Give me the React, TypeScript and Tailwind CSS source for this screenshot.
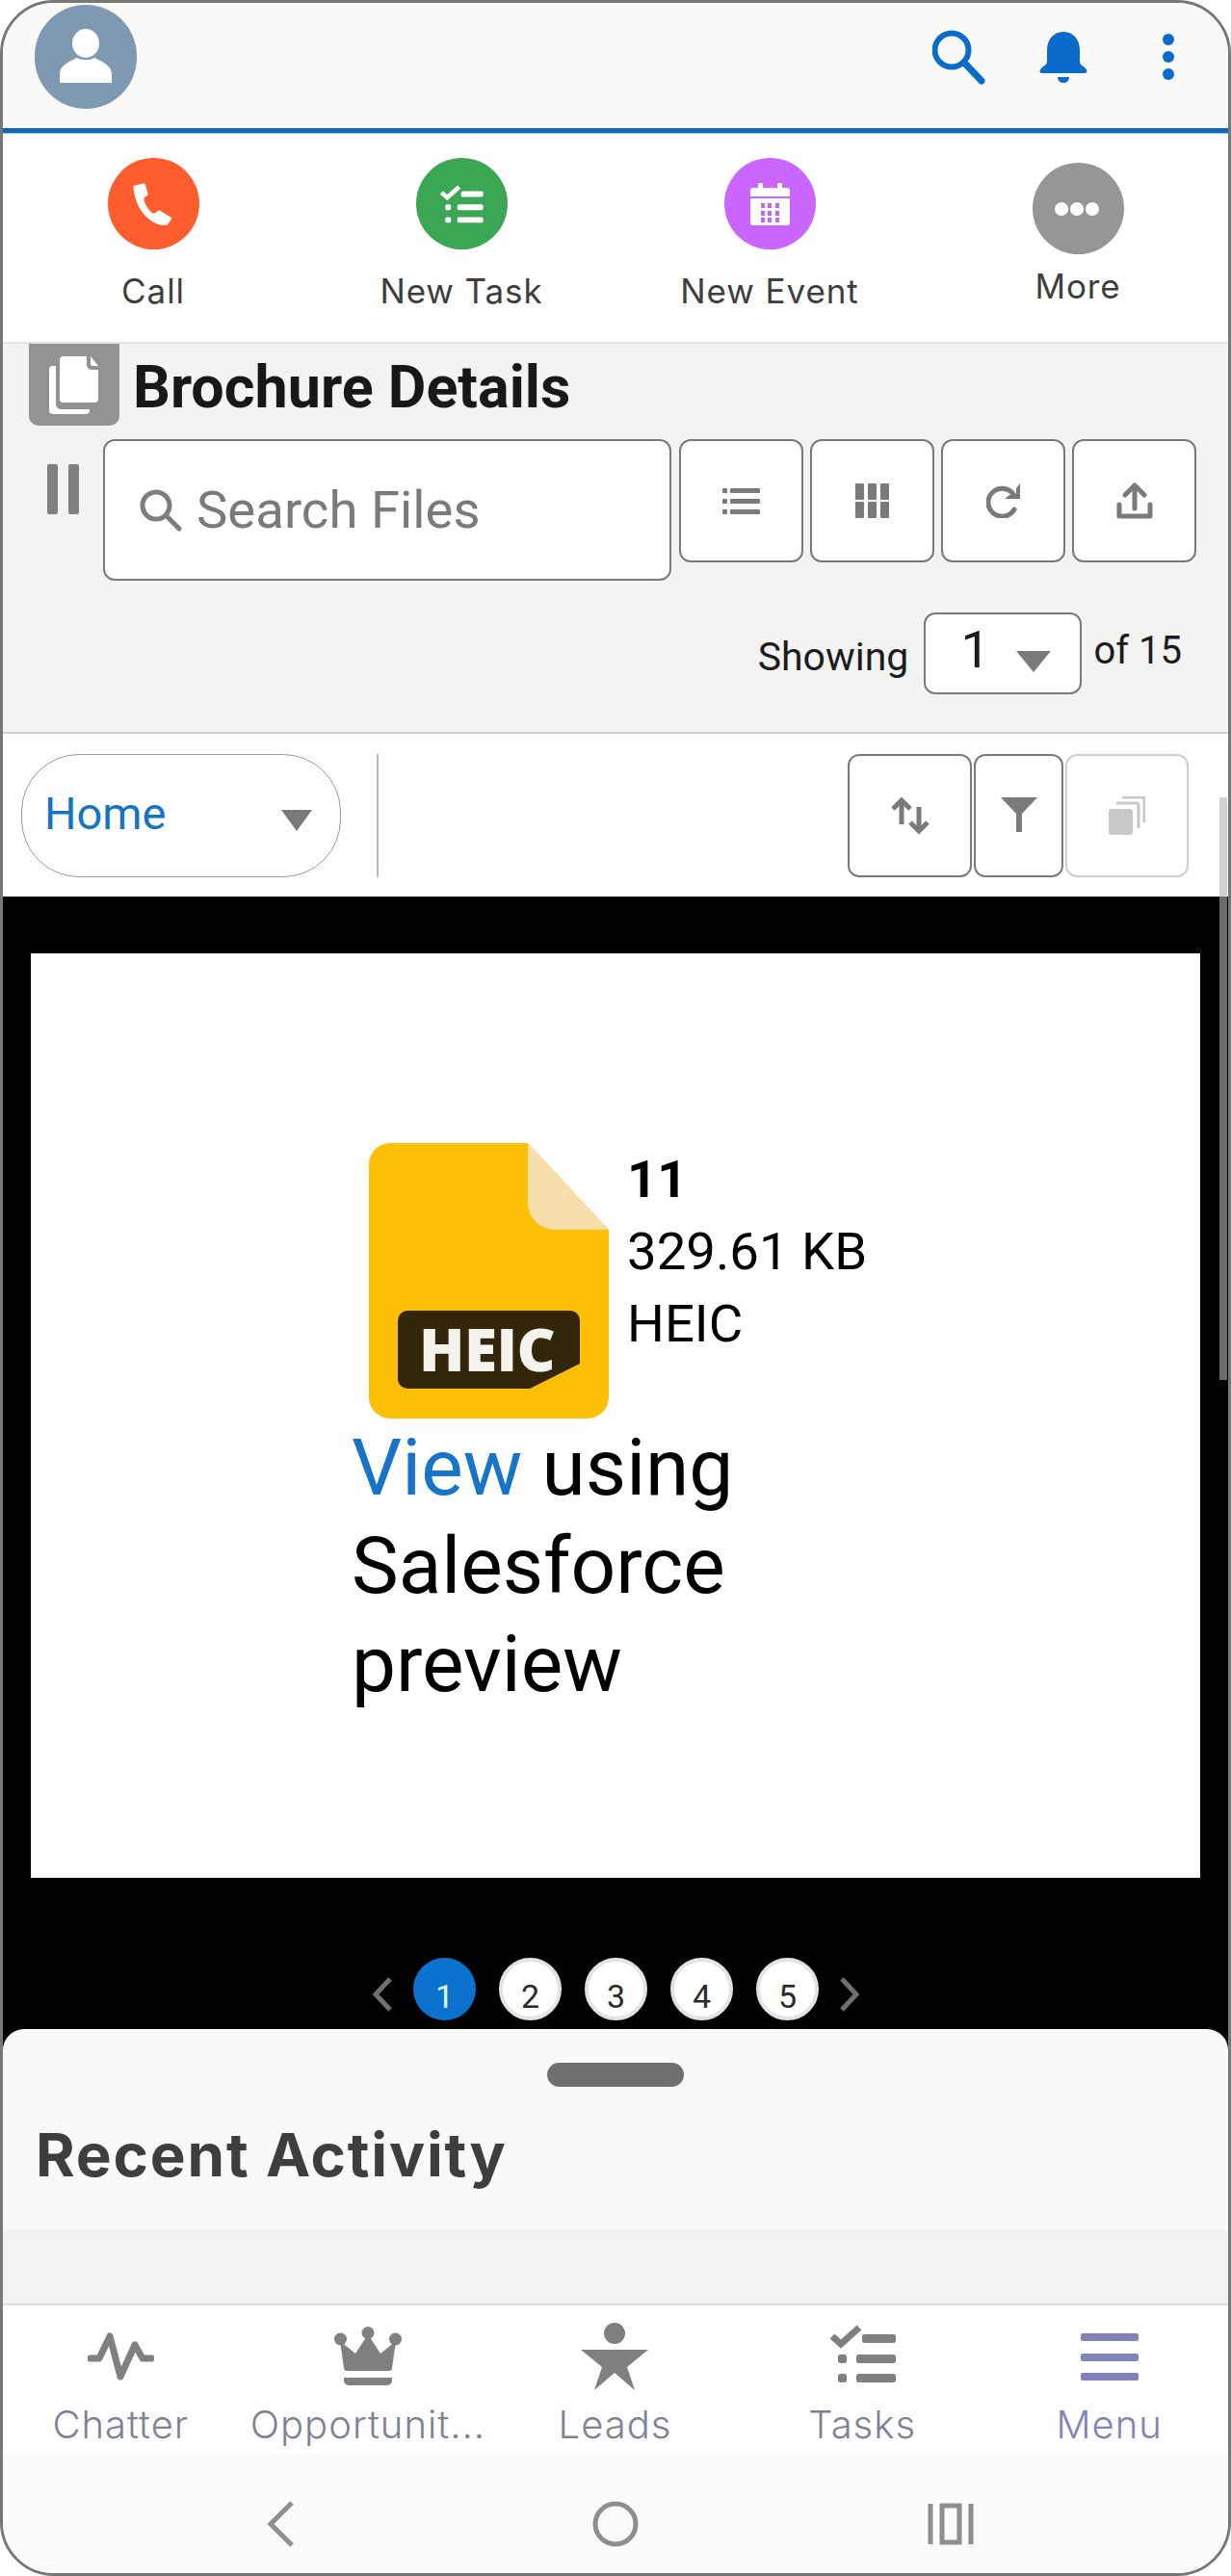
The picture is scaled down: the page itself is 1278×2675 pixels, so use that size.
import React from "react";

const TaskGlyph = ({ w, h, color }: { w: number; h: number; color: string }) => (
  <svg width={w} height={h} viewBox="0 0 69 61" fill={color}>
    <polyline points="3,12 12,20 31,3" fill="none" stroke={color} strokeWidth="7" />
    <rect x="34" y="10" width="35" height="9" rx="2.5" />
    <rect x="9" y="31" width="9" height="9" rx="2.5" />
    <rect x="28" y="31" width="41" height="9" rx="2.5" />
    <rect x="9" y="51" width="9" height="9" rx="2.5" />
    <rect x="28" y="51" width="41" height="9" rx="2.5" />
  </svg>
);

const PhoneIcon = () => (
  <svg width="42" height="44" viewBox="0 0 42 44" fill="#fff">
    <path d="M2 2.5L11 0.5c1-.2 1.6.2 1.9 1l2.6 9.5c.2.8 0 1.4-.6 1.9l-3.6 2.8c.6 6.5 5.4 13.5 10.6 16.4l4.2-3.2c.6-.5 1.3-.5 2-.1l11.2 6.6c.8.5 1 1.2.6 2l-3.6 5.6c-.5.8-1.2 1-2 1C18 44.500 2 27 .5 4.500 .4 3.500 1 2.700 2 2.500z" />
  </svg>
);

const CalendarIcon = () => (
  <svg width="41" height="44" viewBox="0 0 41 44" fill="#fff">
    <rect x="8" y="0" width="5" height="8" rx="1.5" />
    <rect x="28" y="0" width="5" height="8" rx="1.5" />
    <path d="M3 5h35a3 3 0 0 1 3 3v6H0V8a3 3 0 0 1 3-3z" />
    <path d="M0 16h41v25a3 3 0 0 1-3 3H3a3 3 0 0 1-3-3z" />
    <g fill="#c763fa">
      {[21, 29, 36].map((y) =>
        [11, 18, 26].map((x) => <rect key={`${x}-${y}`} x={x} y={y} width="4" height="5" />)
      )}
    </g>
  </svg>
);

const MoreDots = () => (
  <svg width="50" height="16" viewBox="0 0 50 16" fill="#fff">
    <circle cx="8" cy="8" r="7" />
    <circle cx="24" cy="8" r="7" />
    <circle cx="40" cy="8" r="7" />
  </svg>
);

const Action = ({
  label,
  bg,
  icon,
  low,
}: {
  label: string;
  bg: string;
  icon: React.ReactNode;
  low?: boolean;
}) => (
  <div className={`flex flex-col items-center ${low ? "pt-[30px]" : "pt-[25px]"}`}>
    <div className={`w-[95px] h-[95px] rounded-full flex items-center justify-center ${bg}`}>{icon}</div>
    <div
      className={`font-['Inter',sans-serif] text-[35px] leading-[40px] tracking-[0.9px] text-[#3e3e3c] whitespace-nowrap ${
        low ? "mt-[13px]" : "mt-[23px]"
      }`}
    >
      {label}
    </div>
  </div>
);

const ToolButton = ({ children, w = "w-[129px]" }: { children: React.ReactNode; w?: string }) => (
  <div className={`${w} h-[128px] bg-white border-2 border-[#7a7a7a] rounded-[12px] flex items-center justify-center`}>
    {children}
  </div>
);

const Page = ({ n, active }: { n: number; active?: boolean }) => (
  <div
    className={`w-[65px] h-[65px] rounded-full flex items-center justify-center pt-[15px] text-[34px] leading-[40px] font-['Roboto',sans-serif] ${
      active ? "bg-[#0b72cf] text-[#e6f3ff]" : "bg-white border-[4px] border-[#e3e3e3] text-[#2b2b2b]"
    }`}
  >
    {n}
  </div>
);

const NavItem = ({ label, icon, color = "text-[#7f8296]" }: { label: string; icon: React.ReactNode; color?: string }) => (
  <div className="flex flex-col items-center pt-[14px]">
    <div className="h-[82px] flex items-start justify-center">{icon}</div>
    <div className={`mt-[4px] font-['Inter',sans-serif] font-light text-[40px] leading-[48px] tracking-[1px] whitespace-nowrap ${color}`}>
      {label}
    </div>
  </div>
);

export default function App() {
  return (
    <div className="w-[1278px] h-[2675px] bg-white">
      <div className="w-full h-full box-border border-[3px] border-[#777777] rounded-[56px] overflow-hidden flex flex-col relative">
        {/* Header */}
        <div className="h-[130px] shrink-0 bg-[#f9f9f7] flex items-start pl-[33px]">
          <div className="mt-[2px] w-[106px] h-[108px] rounded-full bg-[#8099b3] flex items-center justify-center">
            <svg width="54" height="58" viewBox="0 0 54 58" fill="#fff">
              <ellipse cx="27" cy="15" rx="14" ry="15" />
              <path d="M0 56V47c0-9 10-13 18-17 5 3 13 3 18 0 8 4 18 8 18 17v9z" />
            </svg>
          </div>
          <svg className="ml-[826px] mt-[28px]" width="56" height="57" viewBox="0 0 56 57" fill="none" stroke="#0b6bcb">
            <circle cx="20" cy="21" r="17.5" strokeWidth="6" />
            <line x1="33" y1="34" x2="51" y2="53" strokeWidth="7" strokeLinecap="round" />
          </svg>
          <svg className="ml-[54px] mt-[30px]" width="52" height="53" viewBox="0 0 52 53" fill="#0b6bcb">
            <path d="M26 0c-11 0-17 9-17 19v12c0 3-3 4-6 7-2 2-2 5 1 5h44c3 0 3-3 1-5-3-3-6-4-6-7V19c0-10-6-19-17-19z" />
            <path d="M20 47h12c0 4-3 6-6 6s-6-2-6-6z" />
          </svg>
          <svg className="ml-[77px] mt-[32px]" width="12" height="48" viewBox="0 0 12 48" fill="#0b6bcb">
            <circle cx="6" cy="6" r="6" />
            <circle cx="6" cy="24" r="6" />
            <circle cx="6" cy="42" r="6" />
          </svg>
        </div>
        <div className="h-[6px] shrink-0 bg-[#1565b2] border-b border-[#7fd4f0]" />

        {/* Actions */}
        <div className="h-[216px] shrink-0 bg-white overflow-hidden">
          <div className="-ml-[4px] w-[1280px] grid grid-cols-4">
            <Action label="Call" bg="bg-[#ff5d2d]" icon={<PhoneIcon />} />
            <Action label="New Task" bg="bg-[#3ba755]" icon={<TaskGlyph w={46} h={40} color="#fff" />} />
            <Action label="New Event" bg="bg-[#cb65ff]" icon={<CalendarIcon />} />
            <Action label="More" bg="bg-[#969696]" icon={<MoreDots />} low />
          </div>
        </div>

        {/* Gray details */}
        <div className="h-[407px] shrink-0 bg-[#f3f3f3] border-t-2 border-t-[#e2e2e6] border-b-2 border-b-[#cfcfcf] box-border">
          <div className="flex items-start pl-[27px]">
            <div className="w-[94px] h-[85px] bg-[#939393] rounded-b-[10px] flex items-center justify-center">
              <svg width="52" height="60" viewBox="0 0 52 60" fill="#fff">
                <path d="M0 14a4 4 0 0 1 4-4h3v40a5 5 0 0 0 5 5h30v1a4 4 0 0 1-4 4H4a4 4 0 0 1-4-4z" />
                <path d="M15 0h24v9a5 5 0 0 0 5 5h7v30a4 4 0 0 1-4 4H15a4 4 0 0 1-4-4V4a4 4 0 0 1 4-4z" />
                <path d="M43 0l8 10h-6a2 2 0 0 1-2-2z" />
              </svg>
            </div>
            <div className="ml-[14px] mt-[15px] font-['Roboto',sans-serif] font-bold text-[61px] leading-[60px] text-[#181818] whitespace-nowrap">
              Brochure Details
            </div>
          </div>

          <div className="mt-[14px] flex items-start pl-[46px]">
            <div className="mt-[26px] w-[33px] h-[52px] flex justify-between">
              <div className="w-[11px] h-full rounded-[2px] bg-[#808080]" />
              <div className="w-[11px] h-full rounded-[2px] bg-[#808080]" />
            </div>
            <div className="ml-[25px] w-[590px] h-[147px] bg-white border-2 border-[#7a7a7a] rounded-[12px] flex items-start pl-[36px]">
              <svg className="mt-[50px]" width="44" height="44" viewBox="0 0 44 44" fill="none" stroke="#7d7d7d">
                <circle cx="17" cy="17" r="14" strokeWidth="5" />
                <line x1="27" y1="27" x2="41" y2="41" strokeWidth="5" strokeLinecap="round" />
              </svg>
              <span className="ml-[15px] mt-[41px] font-['Roboto',sans-serif] text-[54.5px] leading-[60px] text-[#7a7a7a] whitespace-nowrap">
                Search Files
              </span>
            </div>
            <div className="ml-[8px] flex gap-[7px]">
              <ToolButton>
                <svg width="39" height="27" viewBox="0 0 39 27" fill="#7a7a7a">
                  {[0, 11, 22].map((y) => (
                    <g key={y}>
                      <rect x="0" y={y} width="5" height="5" rx="1" />
                      <rect x="8" y={y} width="31" height="5" rx="1" />
                    </g>
                  ))}
                </svg>
              </ToolButton>
              <ToolButton>
                <svg width="35" height="36" viewBox="0 0 35 36" fill="#7a7a7a">
                  {[0, 19].map((y) =>
                    [0, 13, 26].map((x) => <rect key={`${x}-${y}`} x={x} y={y} width="9" height="17" rx="1" />)
                  )}
                </svg>
              </ToolButton>
              <ToolButton>
                <svg width="36" height="36" viewBox="0 0 36 36" fill="none" stroke="#7a7a7a">
                  <path d="M29 12.5A14.5 14.5 0 1 0 29 27" strokeWidth="5" strokeLinecap="round" />
                  <path d="M35 0v16H19l5-4h7V5z" fill="#7a7a7a" stroke="none" />
                </svg>
              </ToolButton>
              <ToolButton>
                <svg width="38" height="38" viewBox="0 0 38 38" fill="none" stroke="#7a7a7a" strokeWidth="5" strokeLinecap="round" strokeLinejoin="round">
                  <line x1="19" y1="5" x2="19" y2="27" />
                  <polyline points="9,13 19,3 29,13" />
                  <polyline points="3,23 3,35 35,35 35,23" />
                </svg>
              </ToolButton>
            </div>
          </div>

          <div className="mt-[33px] flex items-start justify-end pr-[48px]">
            <span className="mt-[22px] font-['Roboto',sans-serif] text-[41px] leading-[48px] text-[#1c1c1c]">Showing</span>
            <div className="ml-[16px] w-[164px] h-[85px] bg-white border-2 border-[#7a7a7a] rounded-[12px] flex items-start pl-[36px]">
              <span className="mt-[5px] font-['Roboto',sans-serif] text-[54px] leading-[64px] text-[#1c1c1c]">1</span>
              <svg className="ml-[27px] mt-[38px]" width="36" height="22" viewBox="0 0 36 22" fill="#7a7a7a">
                <path d="M0 0h36L18 22z" />
              </svg>
            </div>
            <span className="ml-[12px] mt-[16px] font-['Roboto',sans-serif] text-[40px] leading-[48px] text-[#1c1c1c]">of 15</span>
          </div>
        </div>

        {/* Toolbar */}
        <div className="h-[169px] shrink-0 bg-white flex items-start pt-[21px] pl-[19px] pr-[41px]">
          <div className="w-[332px] h-[128px] border-[1.5px] border-[#9a9a9a] rounded-[60px] flex items-start pl-[23px]">
            <span className="mt-[33px] font-['Roboto',sans-serif] text-[47px] leading-[56px] text-[#1675bf]">Home</span>
            <svg className="ml-[120px] mt-[57px]" width="32" height="22" viewBox="0 0 32 22" fill="#7a7a7a">
              <path d="M0 0h32L16 22z" />
            </svg>
          </div>
          <div className="ml-[37px] w-[1.5px] h-[128px] bg-[#bdbdbd]" />
          <div className="ml-auto flex gap-[2px]">
            <ToolButton>
              <svg width="40" height="40" viewBox="0 0 40 40" fill="none" stroke="#7a7a7a" strokeWidth="5">
                <line x1="11" y1="5" x2="11" y2="29" />
                <polyline points="2,13 11,4 20,13" />
                <line x1="29" y1="11" x2="29" y2="35" />
                <polyline points="20,27 29,36 38,27" />
              </svg>
            </ToolButton>
            <ToolButton w="w-[93px]">
              <svg className="mt-[-2px]" width="38" height="36" viewBox="0 0 38 36" fill="#7a7a7a">
                <path d="M0 0h38L22 17v19h-6V17z" />
              </svg>
            </ToolButton>
            <div className="w-[128px] h-[128px] bg-white border-2 border-[#cfcfcf] rounded-[12px] flex items-center justify-center">
              <svg width="38" height="40" viewBox="0 0 38 40">
                <path d="M14 1h21a2 2 0 0 1 2 2v24" fill="none" stroke="#c8c8c8" strokeWidth="3" />
                <path d="M8 7h21a2 2 0 0 1 2 2v24" fill="none" stroke="#c8c8c8" strokeWidth="3" />
                <rect x="0" y="13" width="25" height="27" rx="3" fill="#c8c8c8" />
              </svg>
            </div>
          </div>
        </div>

        {/* Black preview */}
        <div className="h-[1384px] shrink-0 bg-black flex flex-col">
          <div className="mt-[59px] mx-[29px] h-[960px] shrink-0 bg-white pl-[333px] pt-[197px]">
            <div className="flex items-start pl-[18px]">
              <div className="relative w-[249px] h-[286px] shrink-0">
                <svg width="249" height="286" viewBox="0 0 249 286">
                  <path d="M22 0h143l84 90v174a22 22 0 0 1-22 22H22a22 22 0 0 1-22-22V22A22 22 0 0 1 22 0z" fill="#fdc006" />
                  <path d="M165 0l84 90h-56a28 28 0 0 1-28-28z" fill="#f8deaa" />
                  <path d="M40 174a10 10 0 0 0-10 10v61a10 10 0 0 0 10 10h127l52-26v-45a10 10 0 0 0-10-10z" fill="#33260a" />
                </svg>
                <span className="absolute left-[52px] top-[173px] font-['Open_Sans',sans-serif] font-extrabold text-[62px] leading-[80px] tracking-[-0.5px] text-[#f5f3ee]">
                  HEIC
                </span>
              </div>
              <div className="ml-[19px] font-['Roboto',sans-serif] text-[54.5px] leading-[75px] text-black whitespace-nowrap">
                <div className="font-bold">11</div>
                <div>329.61 KB</div>
                <div>HEIC</div>
              </div>
            </div>
            <div className="w-[440px] font-['Roboto',sans-serif] text-[82px] leading-[102px] text-black">
              <span className="text-[#1675c9]">View</span> using Salesforce preview
            </div>
          </div>

          <div className="mt-[83px] flex items-center pl-[384px]">
            <svg className="mt-[10px] mr-[22px]" width="20" height="36" viewBox="0 0 20 36" fill="none" stroke="#6f6f6f" strokeWidth="5">
              <polyline points="18,2 3,18 18,34" />
            </svg>
            <div className="flex gap-[24px]">
              <Page n={1} active />
              <Page n={2} />
              <Page n={3} />
              <Page n={4} />
              <Page n={5} />
            </div>
            <svg className="mt-[10px] ml-[22px]" width="20" height="36" viewBox="0 0 20 36" fill="none" stroke="#6f6f6f" strokeWidth="5">
              <polyline points="2,2 17,18 2,34" />
            </svg>
          </div>

          <div className="mt-[9px] h-[208px] shrink-0 bg-[#f9f9f7] rounded-t-[22px] pt-[35px]">
            <div className="w-[142px] h-[25px] mx-auto rounded-full bg-[#6f6f6d]" />
            <div className="mt-[36px] pl-[34px] font-['Inter',sans-serif] font-bold text-[62px] leading-[70px] tracking-[1.8px] text-[#3e3e3c] whitespace-nowrap">
              Recent Activity
            </div>
          </div>
        </div>

        {/* Band */}
        <div className="h-[79px] shrink-0 bg-[#f2f2f2] border-b-2 border-[#dcdcdc] box-border" />

        {/* Tabs */}
        <div className="h-[154px] shrink-0 bg-white overflow-hidden">
          <div className="-ml-[6px] w-[1283px] grid grid-cols-5">
            <NavItem
              label="Chatter"
              icon={
                <svg className="mt-[14px]" width="69" height="50" viewBox="0 0 69 50" fill="none" stroke="#808080" strokeWidth="7" strokeLinecap="round" strokeLinejoin="round">
                  <polyline points="3,27 12,27 23,4 34,46 49,13 57,27 66,27" />
                </svg>
              }
            />
            <NavItem
              label="Opportunit..."
              icon={
                <svg className="mt-[8px]" width="70" height="61" viewBox="0 0 70 61" fill="#808080">
                  <circle cx="6.5" cy="13" r="6.5" />
                  <circle cx="35" cy="6.5" r="6.5" />
                  <circle cx="63.5" cy="13" r="6.5" />
                  <path d="M6 15L22 28 35 8 48 28 64 15 60 43Q60 46 57 46H13Q10 46 10 43Z" />
                  <path d="M10 53H60V56a5 5 0 0 1-5 5H15a5 5 0 0 1-5-5z" />
                </svg>
              }
            />
            <NavItem
              label="Leads"
              icon={
                <svg className="mt-[4px]" width="70" height="70" viewBox="0 0 70 70" fill="#808080">
                  <circle cx="35" cy="11" r="11" />
                  <path d="M0 28H70L48 46 56 70 35 52 14 70 22 46Z" />
                </svg>
              }
            />
            <NavItem label="Tasks" icon={<div className="mt-[6px]"><TaskGlyph w={69} h={61} color="#808080" /></div>} />
            <NavItem
              label="Menu"
              color="text-[#8182b8]"
              icon={
                <svg className="mt-[15px]" width="60" height="49" viewBox="0 0 60 49" fill="#8182ba">
                  <rect x="0" y="0" width="60" height="8" rx="2" />
                  <rect x="0" y="21" width="60" height="8" rx="2" />
                  <rect x="0" y="41" width="60" height="8" rx="2" />
                </svg>
              }
            />
          </div>
        </div>

        {/* Android nav */}
        <div className="flex-1 bg-[#fafafa] flex items-start justify-center gap-[300px] pt-[49px]">
          <svg width="48" height="48" viewBox="0 0 48 48" fill="none" stroke="#8e8e8e" strokeWidth="5">
            <polyline points="36,2 14,24 36,46" />
          </svg>
          <svg width="48" height="48" viewBox="0 0 48 48" fill="none" stroke="#8e8e8e" strokeWidth="5">
            <circle cx="24" cy="24" r="21" />
          </svg>
          <svg width="48" height="48" viewBox="0 0 48 48" fill="none" stroke="#8e8e8e" strokeWidth="5">
            <line x1="3" y1="3" x2="3" y2="45" />
            <rect x="15" y="5" width="18" height="38" />
            <line x1="45" y1="3" x2="45" y2="45" />
          </svg>
        </div>

        {/* Scrollbar overlay */}
        <div className="absolute left-[1263px] top-[825px] w-[8px] h-[605px] bg-[#b3b3b3]/60" />
      </div>
    </div>
  );
}
